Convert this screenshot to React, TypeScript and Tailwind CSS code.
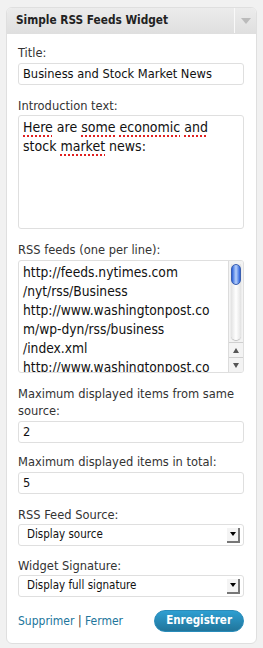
const font = { fontFamily: '"DejaVu Sans Condensed", "DejaVu Sans", sans-serif' };

function Label({ children }: { children: React.ReactNode }) {
  return <div className="text-[12.75px] leading-[17px] text-[#333]">{children}</div>;
}

function TextInput({ value }: { value: string }) {
  return (
    <div className="mt-[2px] h-[22px] rounded-[3px] border border-[#dfdfdf] bg-white px-[4px] text-[12.75px] leading-[20px] text-[#111]">
      {value}
    </div>
  );
}

function Select({ value }: { value: string }) {
  return (
    <div className="mt-[1px] flex h-[22px] items-center rounded-[3px] border border-[#dfdfdf] bg-white pl-[8px] pr-[3px] text-[11.5px] text-[#111]">
      <span className="flex-1">{value}</span>
      <span className="flex h-[15px] w-[13px] items-center justify-center border-b-2 border-r-2 border-b-[#777] border-r-[#777] bg-[#f4f4f4]">
        <span className="h-0 w-0 border-x-[3px] border-t-[4px] border-x-transparent border-t-black" />
      </span>
    </div>
  );
}

function Typo({ children }: { children: React.ReactNode }) {
  return (
    <span className="underline decoration-[#e02020] decoration-dotted decoration-2 underline-offset-[3px]">
      {children}
    </span>
  );
}

function Scrollbar() {
  return (
    <div className="flex w-[15px] shrink-0 flex-col border-l border-[#dcdcdc] bg-[#f3f3f3]">
      <div className="flex flex-1 flex-col px-[2px] pb-[2px] pt-[3px]">
        <div className="flex flex-1 flex-col rounded-b-full bg-gradient-to-r from-[#e2e2e2] via-[#ffffff] to-[#e2e2e2] shadow-[0_1px_1px_#bbb]">
          <div className="h-[21px] rounded-full border border-[#3a5fb0] bg-gradient-to-r from-[#2c5ed8] via-[#b8d0fa] to-[#2c5ed8]" />
        </div>
      </div>
      <div className="flex h-[15px] items-center justify-center border-t border-[#cfcfcf]">
        <span className="h-0 w-0 border-x-[3px] border-b-[5px] border-x-transparent border-b-[#555]" />
      </div>
      <div className="flex h-[15px] items-center justify-center border-t border-[#cfcfcf]">
        <span className="h-0 w-0 border-x-[3px] border-t-[5px] border-x-transparent border-t-[#555]" />
      </div>
    </div>
  );
}

export default function App() {
  return (
    <div className="min-h-[648px] bg-[#f1f1f1] px-[6px] pt-[7px]" style={font}>
      <div className="overflow-hidden rounded-[6px] border border-[#dfdfdf] bg-white">
        <div className="flex h-[26px] items-stretch border-b border-[#dfdfdf] bg-gradient-to-b from-[#ececec] to-[#dfdfdf]">
          <div className="flex flex-1 items-center pl-[9px] text-[11.75px] font-bold text-[#222]">
            Simple RSS Feeds Widget
          </div>
          <div className="flex w-[22px] items-center justify-center border-l border-[#f9f9f9]">
            <span className="h-0 w-0 border-x-[5px] border-t-[6px] border-x-transparent border-t-[#bbb]" />
          </div>
        </div>

        <div className="pl-[11px] pr-[12px] pt-[10px] pb-[11px]">
          <div>
            <Label>Title:</Label>
            <TextInput value="Business and Stock Market News" />
          </div>

          <div className="mt-[12px]">
            <Label>Introduction text:</Label>
            <div className="mt-[1px] h-[114px] rounded-[3px] border border-[#dfdfdf] bg-white px-[4px] pt-[2px] text-[14px] leading-[19px] text-[#111]">
              <Typo>Here</Typo> are <Typo>some</Typo> <Typo>economic</Typo> <Typo>and</Typo>
              <br />
              stock <Typo>market</Typo> news:
            </div>
          </div>

          <div className="mt-[12px]">
            <Label>RSS feeds (one per line):</Label>
            <div className="mt-[2px] flex h-[113px] overflow-hidden rounded-[3px] border border-[#dfdfdf] bg-white">
              <div className="flex-1 overflow-hidden whitespace-nowrap px-[4px] pt-[2px] text-[13.7px] leading-[19px] text-[#111]">
                <div>http://feeds.nytimes.com</div>
                <div>/nyt/rss/Business</div>
                <div>http://www.washingtonpost.co</div>
                <div>m/wp-dyn/rss/business</div>
                <div>/index.xml</div>
                <div>http://www.washingtonpost.co</div>
              </div>
              <Scrollbar />
            </div>
          </div>

          <div className="mt-[12px]">
            <Label>
              Maximum displayed items from same
              <br />
              source:
            </Label>
            <TextInput value="2" />
          </div>

          <div className="mt-[10px]">
            <Label>Maximum displayed items in total:</Label>
            <TextInput value="5" />
          </div>

          <div className="mt-[12px]">
            <Label>RSS Feed Source:</Label>
            <Select value="Display source" />
          </div>

          <div className="mt-[11px]">
            <Label>Widget Signature:</Label>
            <Select value="Display full signature" />
          </div>

          <div className="mt-[13px] flex items-center justify-between">
            <div className="text-[12px] text-[#333]">
              <span className="text-[#21759b]">Supprimer</span> | <span className="text-[#21759b]">Fermer</span>
            </div>
            <button className="h-[22px] rounded-full border border-[#298cba] bg-gradient-to-b from-[#2e9fd2] to-[#21759b] px-[11px] text-[11.5px] font-bold text-white">
              Enregistrer
            </button>
          </div>
        </div>
      </div>
    </div>
  );
}
